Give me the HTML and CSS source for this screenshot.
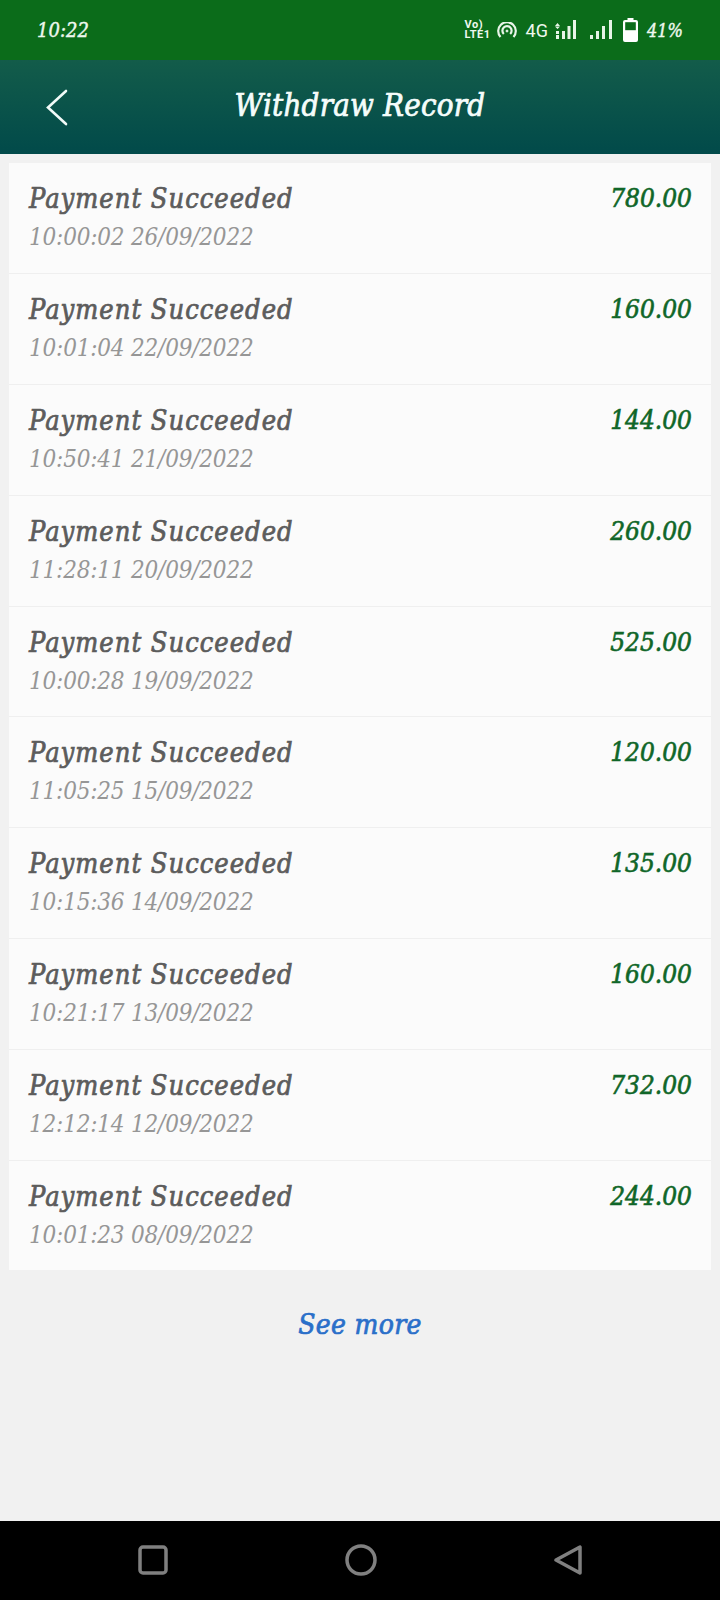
FILE: index.html
```html
<!DOCTYPE html>
<html lang="en">

<head>
    <meta charset="UTF-8">
    <meta name="viewport" content="width=device-width, initial-scale=1.0">
    <title>Withdraw Record</title>
    <link rel="stylesheet" href="styles.css">
</head>

<body>
    <div class="status-bar">
        <span class="status-time">10:22</span>
        <div class="status-icons">
            <div class="volte"><span>Vo)</span><span>LTE1</span></div>
            <svg class="hotspot" width="20" height="16" viewBox="0 0 20 16" fill="none" stroke="#e8f5e8" stroke-width="2.200">
                <path d="M3.500 15a8.800 8.800 0 1 1 13 0"/>
                <path d="M6.800 12a4.600 4.600 0 1 1 6.400 0"/>
                <circle cx="10" cy="9" r="1" fill="#e8f5e8" stroke-width="1"/>
            </svg>
            <span class="net">4G</span>
            <svg class="signal-first" width="21" height="20" viewBox="0 0 21 20" fill="#e8f5e8">
                <path d="M2.500 3l2.500 3H0zM2.500 9L0 6.500h5zM1 11h3v3H1zM1 15h3v4H1z"/>
                <rect x="7" y="11" width="3" height="8"/>
                <rect x="12.500" y="6" width="3" height="13"/>
                <rect x="18" y="0" width="3" height="19"/>
            </svg>
            <svg class="signal" width="22" height="20" viewBox="0 0 22 20" fill="#e8f5e8">
                <rect x="0" y="15" width="3" height="4"/>
                <rect x="6" y="11" width="3" height="8"/>
                <rect x="12" y="6" width="3" height="13"/>
                <rect x="19" y="0" width="3" height="19"/>
            </svg>
            <svg class="battery" width="15" height="24" viewBox="0 0 15 24" fill="#fff">
                <path d="M4.500 0h6v2H13a2 2 0 0 1 2 2v18a2 2 0 0 1-2 2H2a2 2 0 0 1-2-2V4a2 2 0 0 1 2-2h2.500z"/>
                <rect x="2.200" y="4.200" width="10.600" height="8" fill="#0b6c1a"/>
            </svg>
            <span class="status-batt">41%</span>
        </div>
    </div>

    <header class="title-bar">
        <svg class="back" width="24" height="38" viewBox="0 0 24 38" fill="none" stroke="#f2fbf8" stroke-width="2.600" stroke-linecap="round">
            <path d="M21 2L3 18.500 21 35"/>
        </svg>
        <h1>Withdraw Record</h1>
    </header>

    <main class="content">
        <ul class="records">
            <li class="record">
                <div><p class="rec-title">Payment Succeeded</p><p class="rec-date">10:00:02 26/09/2022</p></div>
                <span class="rec-amount">780.00</span>
            </li>
            <li class="record">
                <div><p class="rec-title">Payment Succeeded</p><p class="rec-date">10:01:04 22/09/2022</p></div>
                <span class="rec-amount">160.00</span>
            </li>
            <li class="record">
                <div><p class="rec-title">Payment Succeeded</p><p class="rec-date">10:50:41 21/09/2022</p></div>
                <span class="rec-amount">144.00</span>
            </li>
            <li class="record">
                <div><p class="rec-title">Payment Succeeded</p><p class="rec-date">11:28:11 20/09/2022</p></div>
                <span class="rec-amount">260.00</span>
            </li>
            <li class="record">
                <div><p class="rec-title">Payment Succeeded</p><p class="rec-date">10:00:28 19/09/2022</p></div>
                <span class="rec-amount">525.00</span>
            </li>
            <li class="record">
                <div><p class="rec-title">Payment Succeeded</p><p class="rec-date">11:05:25 15/09/2022</p></div>
                <span class="rec-amount">120.00</span>
            </li>
            <li class="record">
                <div><p class="rec-title">Payment Succeeded</p><p class="rec-date">10:15:36 14/09/2022</p></div>
                <span class="rec-amount">135.00</span>
            </li>
            <li class="record">
                <div><p class="rec-title">Payment Succeeded</p><p class="rec-date">10:21:17 13/09/2022</p></div>
                <span class="rec-amount">160.00</span>
            </li>
            <li class="record">
                <div><p class="rec-title">Payment Succeeded</p><p class="rec-date">12:12:14 12/09/2022</p></div>
                <span class="rec-amount">732.00</span>
            </li>
            <li class="record">
                <div><p class="rec-title">Payment Succeeded</p><p class="rec-date">10:01:23 08/09/2022</p></div>
                <span class="rec-amount">244.00</span>
            </li>
        </ul>
        <a class="see-more" href="#">See more</a>
    </main>

    <nav class="nav-bar">
        <svg width="30" height="30" viewBox="0 0 30 30" fill="none" stroke="#808080" stroke-width="3.500">
            <rect x="2" y="2" width="26" height="26" rx="3"/>
        </svg>
        <svg width="32" height="32" viewBox="0 0 32 32" fill="none" stroke="#808080" stroke-width="3.500">
            <circle cx="16" cy="16" r="14"/>
        </svg>
        <svg width="30" height="30" viewBox="0 0 30 30" fill="none" stroke="#808080" stroke-width="3.500" stroke-linejoin="round">
            <path d="M26 2v26L2 15z"/>
        </svg>
    </nav>
</body>

</html>
```

FILE: styles.css
```css
body {
    display: flex;
    flex-direction: column;
    height: 1600px;
    margin: 0;
    font-family: "DejaVu Serif Condensed", "DejaVu Serif", serif;
    font-style: italic;
    background-color: #f1f1f1;
}

p {
    margin: 0;
}

.status-bar {
    display: flex;
    justify-content: space-between;
    align-items: center;
    box-sizing: border-box;
    height: 60px;
    padding: 0 37px;
    color: #eef8ee;
    background-color: #0b6c1a;
}

.status-time {
    font-size: 20px;
    -webkit-text-stroke: 0.4px #eef8ee;
}

.status-icons {
    display: flex;
    align-items: center;
    gap: 9px;
}

.volte {
    display: flex;
    flex-direction: column;
    font-family: Roboto, sans-serif;
    font-style: normal;
    font-size: 11px;
    font-weight: bold;
    line-height: 10px;
    letter-spacing: 0.5px;
}

.hotspot {
    margin-left: -3px;
}

.net {
    font-family: Roboto, sans-serif;
    font-style: normal;
    font-size: 18px;
}

.signal-first {
    margin-left: -2px;
}

.signal {
    margin-left: 5px;
}

.battery {
    margin-left: 2px;
}

.status-batt {
    font-size: 18px;
    -webkit-text-stroke: 0.4px #eef8ee;
}

.title-bar {
    display: flex;
    justify-content: center;
    align-items: center;
    position: relative;
    height: 94px;
    background: linear-gradient(#135c4a, #014a4a);
}

.title-bar h1 {
    margin: 0 0 4px;
    color: #f5fdfb;
    font-size: 31px;
    font-weight: normal;
    letter-spacing: 0.2px;
    -webkit-text-stroke: 0.7px #f5fdfb;
}

.back {
    position: absolute;
    left: 45px;
    top: 29px;
}

.content {
    flex: 1;
    padding: 9px 9px 0;
    text-align: center;
}

.records {
    margin: 0;
    padding: 0;
    list-style: none;
    background-color: #fbfbfb;
    text-align: left;
}

.record {
    display: flex;
    justify-content: space-between;
    box-sizing: border-box;
    height: 110.9px;
    padding: 18px 19px 0 20px;
    border-bottom: 1px solid #efefef;
}

.record:last-child {
    height: 109px;
    border-bottom: none;
}

.rec-title {
    color: #5c5c5c;
    font-size: 27px;
    line-height: 36px;
    letter-spacing: 1px;
    -webkit-text-stroke: 0.7px #5c5c5c;
}

.rec-date {
    margin-top: 3px;
    color: #969696;
    font-size: 24px;
    line-height: 34px;
    letter-spacing: -0.2px;
}

.rec-amount {
    color: #0f6628;
    font-size: 26px;
    line-height: 34px;
    -webkit-text-stroke: 0.6px #0f6628;
}

.see-more {
    display: inline-block;
    margin-top: 35px;
    color: #2a6fc9;
    font-size: 28px;
    line-height: 40px;
    letter-spacing: 0.3px;
    text-decoration: none;
    -webkit-text-stroke: 0.7px #2a6fc9;
}

.nav-bar {
    display: flex;
    justify-content: space-between;
    align-items: center;
    box-sizing: border-box;
    height: 79px;
    padding: 0 136px 2px 138px;
    background-color: #000;
}
```
